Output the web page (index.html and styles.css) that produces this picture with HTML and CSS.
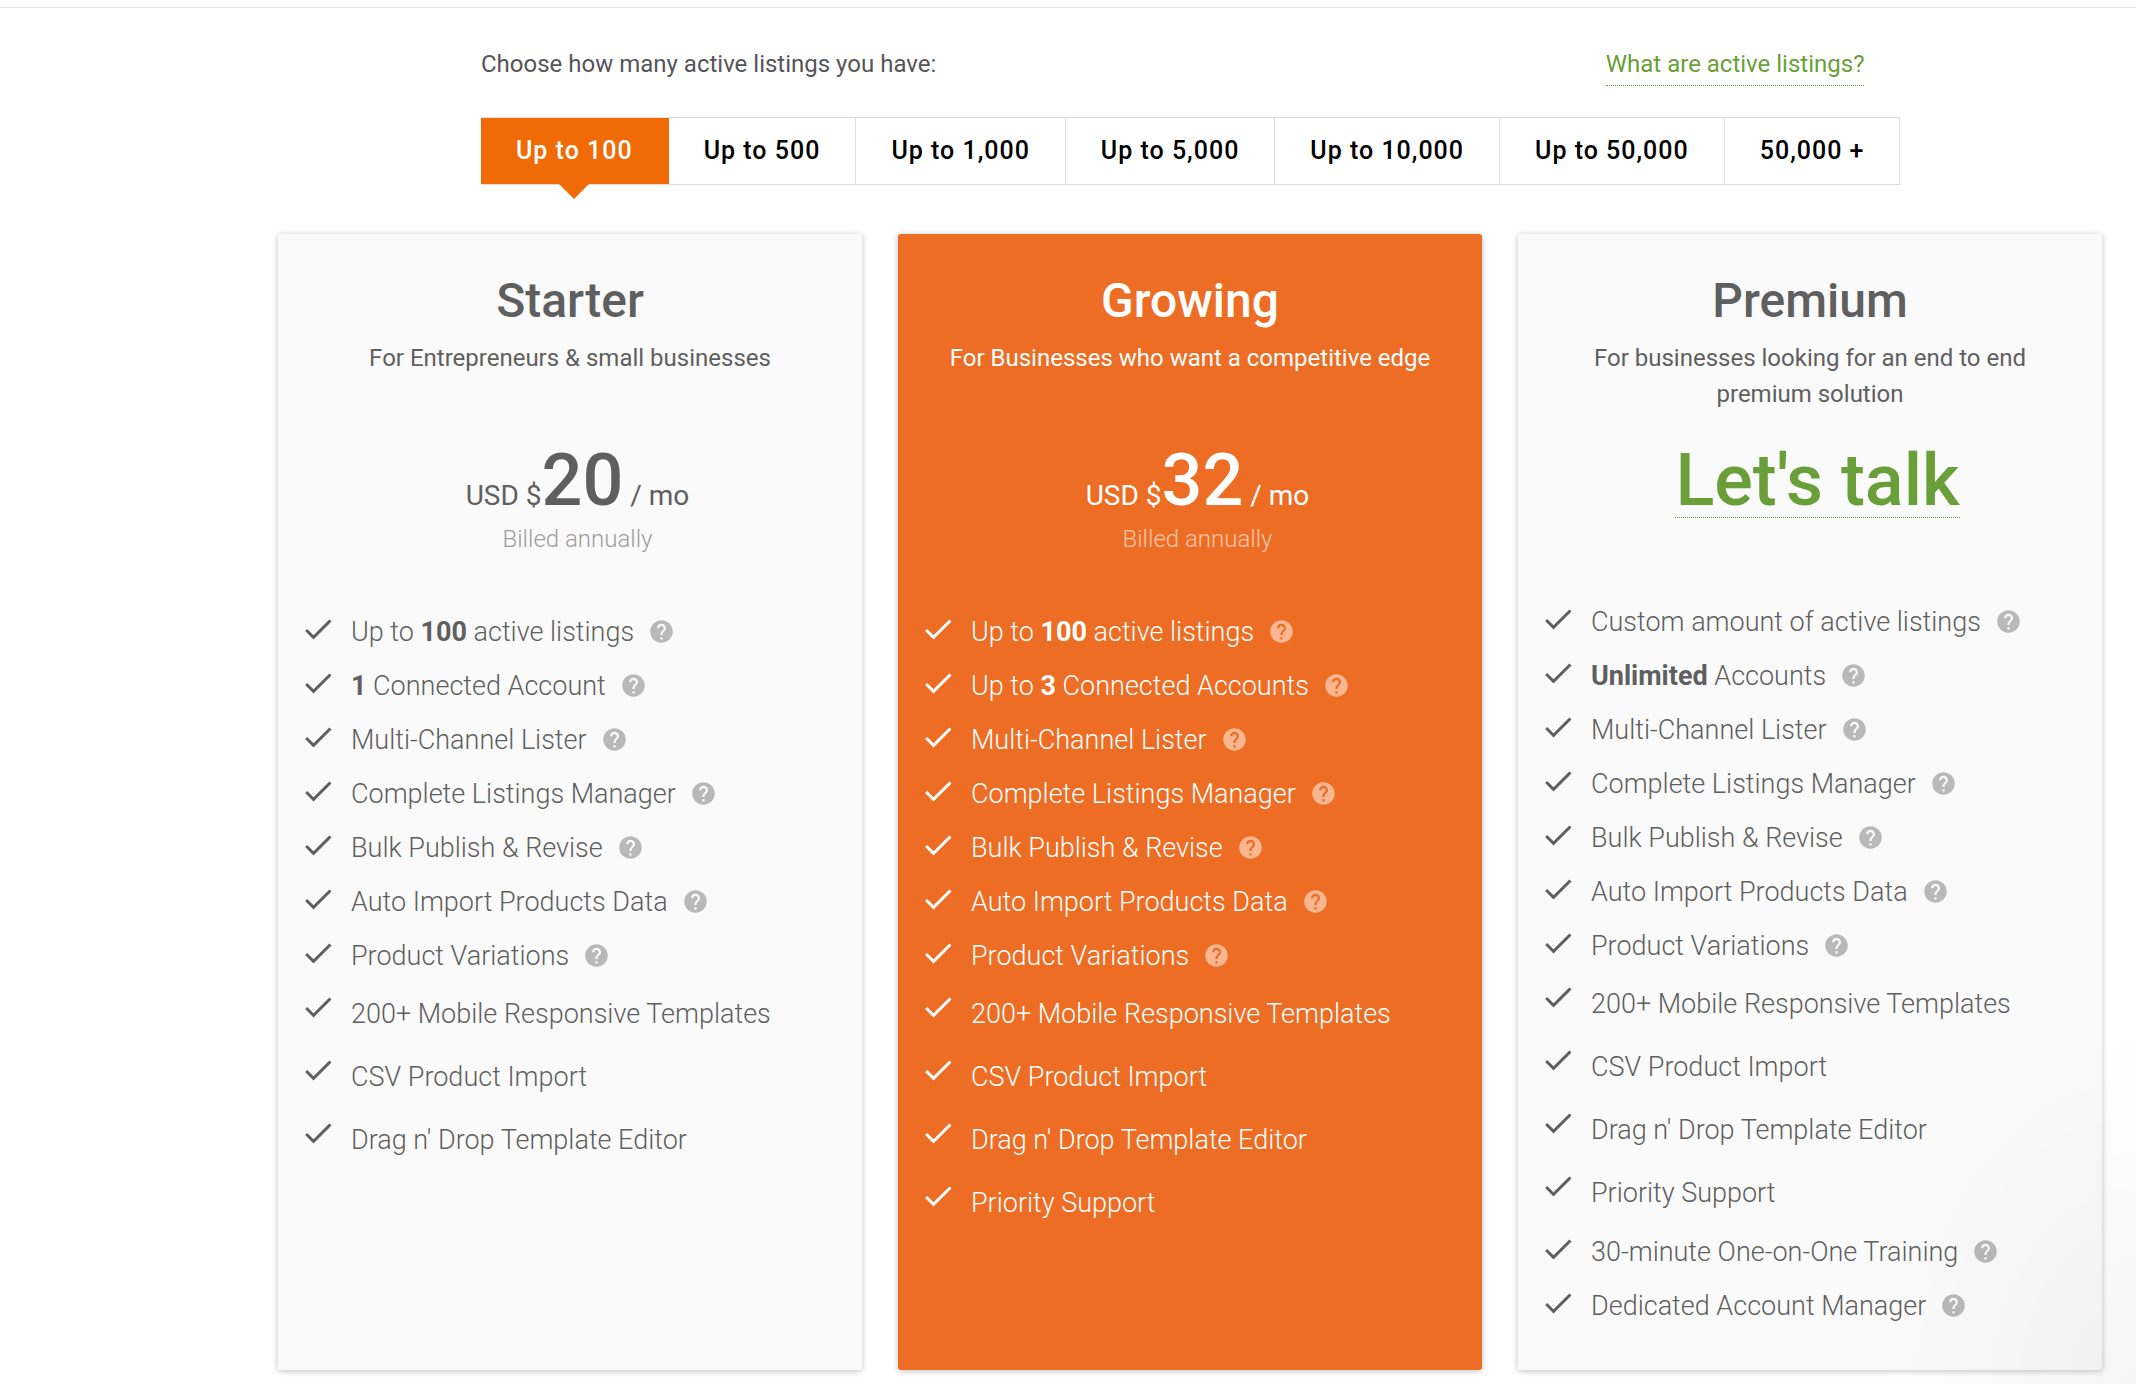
FILE: index.html
```html
<!DOCTYPE html>
<html lang="en">
<head>
<meta charset="utf-8">
<title>Pricing plans</title>
<link rel="stylesheet" href="styles.css">
</head>
<body>
<svg class="sprite" aria-hidden="true">
  <symbol id="check" viewBox="0 0 24 24"><path d="M9 16.17L4.83 12l-1.42 1.41L9 19 21 7l-1.41-1.41z"/></symbol>
  <symbol id="help" viewBox="0 0 24 24"><path d="M12 2C6.48 2 2 6.48 2 12s4.48 10 10 10 10-4.480 10-10S17.520 2 12 2zm1 17h-2v-2h2v2zm2.070-7.750l-.9.920C13.450 12.900 13 13.500 13 15h-2v-.5c0-1.100.450-2.100 1.170-2.830l1.240-1.260c.370-.360.590-.860.590-1.410 0-1.100-.9-2-2-2s-2 .9-2 2H8c0-2.210 1.790-4 4-4s4 1.790 4 4c0 .880-.360 1.680-.930 2.250z"/></symbol>
</svg>
<main class="page">
  <section class="picker">
    <div class="picker-head">
      <p class="picker-label" id="picker-label">Choose how many active listings you have:</p>
      <a class="help-link" href="#active-listings">What are active listings?</a>
    </div>
    <div class="tabs" role="group" aria-labelledby="picker-label">
      <button class="tab tab-active" type="button" aria-pressed="true">Up to 100</button>
      <button class="tab" type="button">Up to 500</button>
      <button class="tab" type="button">Up to 1,000</button>
      <button class="tab" type="button">Up to 5,000</button>
      <button class="tab" type="button">Up to 10,000</button>
      <button class="tab" type="button">Up to 50,000</button>
      <button class="tab" type="button">50,000 +</button>
    </div>
  </section>
  <section class="plans">
    <article class="plan">
      <h2 class="plan-name">Starter</h2>
      <p class="plan-for">For Entrepreneurs &amp; small businesses</p>
      <div class="price">
        <p class="price-line">USD $<strong class="amount">20</strong> / mo</p>
        <p class="billed">Billed annually</p>
      </div>
      <ul class="features">
        <li class="feature"><svg class="check"><use href="#check"/></svg><span>Up to <b>100</b> active listings</span><svg class="help"><use href="#help"/></svg></li>
        <li class="feature"><svg class="check"><use href="#check"/></svg><span><b>1</b> Connected Account</span><svg class="help"><use href="#help"/></svg></li>
        <li class="feature"><svg class="check"><use href="#check"/></svg><span>Multi-Channel Lister</span><svg class="help"><use href="#help"/></svg></li>
        <li class="feature"><svg class="check"><use href="#check"/></svg><span>Complete Listings Manager</span><svg class="help"><use href="#help"/></svg></li>
        <li class="feature"><svg class="check"><use href="#check"/></svg><span>Bulk Publish &amp; Revise</span><svg class="help"><use href="#help"/></svg></li>
        <li class="feature"><svg class="check"><use href="#check"/></svg><span>Auto Import Products Data</span><svg class="help"><use href="#help"/></svg></li>
        <li class="feature"><svg class="check"><use href="#check"/></svg><span>Product Variations</span><svg class="help"><use href="#help"/></svg></li>
        <li class="feature feature-plain"><svg class="check"><use href="#check"/></svg><span>200+ Mobile Responsive Templates</span></li>
        <li class="feature feature-plain"><svg class="check"><use href="#check"/></svg><span>CSV Product Import</span></li>
        <li class="feature feature-plain"><svg class="check"><use href="#check"/></svg><span>Drag n' Drop Template Editor</span></li>
      </ul>
    </article>
    <article class="plan plan-featured">
      <h2 class="plan-name">Growing</h2>
      <p class="plan-for">For Businesses who want a competitive edge</p>
      <div class="price">
        <p class="price-line">USD $<strong class="amount">32</strong> / mo</p>
        <p class="billed">Billed annually</p>
      </div>
      <ul class="features">
        <li class="feature"><svg class="check"><use href="#check"/></svg><span>Up to <b>100</b> active listings</span><svg class="help"><use href="#help"/></svg></li>
        <li class="feature"><svg class="check"><use href="#check"/></svg><span>Up to <b>3</b> Connected Accounts</span><svg class="help"><use href="#help"/></svg></li>
        <li class="feature"><svg class="check"><use href="#check"/></svg><span>Multi-Channel Lister</span><svg class="help"><use href="#help"/></svg></li>
        <li class="feature"><svg class="check"><use href="#check"/></svg><span>Complete Listings Manager</span><svg class="help"><use href="#help"/></svg></li>
        <li class="feature"><svg class="check"><use href="#check"/></svg><span>Bulk Publish &amp; Revise</span><svg class="help"><use href="#help"/></svg></li>
        <li class="feature"><svg class="check"><use href="#check"/></svg><span>Auto Import Products Data</span><svg class="help"><use href="#help"/></svg></li>
        <li class="feature"><svg class="check"><use href="#check"/></svg><span>Product Variations</span><svg class="help"><use href="#help"/></svg></li>
        <li class="feature feature-plain"><svg class="check"><use href="#check"/></svg><span>200+ Mobile Responsive Templates</span></li>
        <li class="feature feature-plain"><svg class="check"><use href="#check"/></svg><span>CSV Product Import</span></li>
        <li class="feature feature-plain"><svg class="check"><use href="#check"/></svg><span>Drag n' Drop Template Editor</span></li>
        <li class="feature feature-plain"><svg class="check"><use href="#check"/></svg><span>Priority Support</span></li>
      </ul>
    </article>
    <article class="plan">
      <h2 class="plan-name">Premium</h2>
      <p class="plan-for">For businesses looking for an end to end premium solution</p>
      <div class="price price-talk">
        <a class="talk" href="#contact">Let's talk</a>
      </div>
      <ul class="features">
        <li class="feature"><svg class="check"><use href="#check"/></svg><span>Custom amount of active listings</span><svg class="help"><use href="#help"/></svg></li>
        <li class="feature"><svg class="check"><use href="#check"/></svg><span><b>Unlimited</b> Accounts</span><svg class="help"><use href="#help"/></svg></li>
        <li class="feature"><svg class="check"><use href="#check"/></svg><span>Multi-Channel Lister</span><svg class="help"><use href="#help"/></svg></li>
        <li class="feature"><svg class="check"><use href="#check"/></svg><span>Complete Listings Manager</span><svg class="help"><use href="#help"/></svg></li>
        <li class="feature"><svg class="check"><use href="#check"/></svg><span>Bulk Publish &amp; Revise</span><svg class="help"><use href="#help"/></svg></li>
        <li class="feature"><svg class="check"><use href="#check"/></svg><span>Auto Import Products Data</span><svg class="help"><use href="#help"/></svg></li>
        <li class="feature"><svg class="check"><use href="#check"/></svg><span>Product Variations</span><svg class="help"><use href="#help"/></svg></li>
        <li class="feature feature-plain"><svg class="check"><use href="#check"/></svg><span>200+ Mobile Responsive Templates</span></li>
        <li class="feature feature-plain"><svg class="check"><use href="#check"/></svg><span>CSV Product Import</span></li>
        <li class="feature feature-plain"><svg class="check"><use href="#check"/></svg><span>Drag n' Drop Template Editor</span></li>
        <li class="feature feature-plain"><svg class="check"><use href="#check"/></svg><span>Priority Support</span></li>
        <li class="feature"><svg class="check"><use href="#check"/></svg><span>30-minute One-on-One Training</span><svg class="help"><use href="#help"/></svg></li>
        <li class="feature"><svg class="check"><use href="#check"/></svg><span>Dedicated Account Manager</span><svg class="help"><use href="#help"/></svg></li>
      </ul>
    </article>
  </section>
</main>
<div class="corner-shade"></div>
</body>
</html>
```
FILE: styles.css
```css
* {
  box-sizing: border-box;
}

body {
  margin: 0;
  background: #fff;
  color: #5f5f5f;
  font-family: Roboto, "Liberation Sans", sans-serif;
  font-size: 24px;
  line-height: 36px;
}

h2,
p,
ul {
  margin: 0;
  padding: 0;
}

.sprite {
  display: none;
}

.page {
  margin-top: 7px;
  padding: 38px 34px 14px 278px;
  border-top: 1px solid #e2e2e2;
}

.picker {
  display: flex;
  flex-direction: column;
  width: fit-content;
  margin-left: 203px;
}

.picker-head {
  display: flex;
  justify-content: space-between;
  height: 71px;
  padding-right: 36px;
}

.picker-label {
  color: #555558;
}

.help-link,
.talk {
  color: #689f38;
  text-decoration: none;
  border-bottom: 1px dotted #689f38;
}

.help-link {
  height: 40px;
}

.tabs {
  display: flex;
  border: 1px solid #dcdcdc;
  border-left: 0;
}

.tab {
  position: relative;
  height: 66px;
  padding: 0 35px;
  border: 0;
  border-right: 1px solid #dcdcdc;
  background: #fff;
  color: #000;
  font: 500 25px/66px Roboto, "Liberation Sans", sans-serif;
  letter-spacing: 1px;
}

.tab:last-child {
  border-right: 0;
}

.tabs .tab-active {
  border-color: #f06a06;
  background: #f06a06;
  color: #fff;
}

.tab-active::after {
  content: "";
  position: absolute;
  top: 100%;
  left: 50%;
  margin-left: -15px;
  border: 15px solid transparent;
  border-top-color: #f06a06;
  border-bottom: 0;
}

.plans {
  display: grid;
  grid-template-columns: repeat(3, 1fr);
  gap: 36px;
  margin-top: 49px;
}

.plan {
  padding: 37px 22px;
  border-radius: 3px;
  background: #fafafa;
  box-shadow: 0 1px 6px rgba(0, 0, 0, 0.25);
}

.plan-featured {
  background: #ed6d24;
  color: #fff;
}

.plan-name {
  font-size: 48px;
  font-weight: 500;
  line-height: 60px;
  text-align: center;
}

.plan-for {
  height: 72px;
  margin-top: 9px;
  padding: 0 24px;
  text-align: center;
}

.price {
  height: 193px;
  padding: 33px 0 0 15px;
  text-align: center;
}

.price-talk {
  height: 183px;
}

.price-line {
  font-size: 28px;
  line-height: 36px;
}

.amount,
.talk {
  font-size: 72px;
  font-weight: 500;
  line-height: 72px;
}

.talk {
  display: inline-block;
}

.billed {
  margin-top: 4px;
  font-weight: 300;
  opacity: 0.6;
}

.features {
  list-style: none;
}

.feature {
  display: flex;
  align-items: center;
  height: 54px;
  font-size: 27px;
  font-weight: 300;
}

.feature-plain {
  height: 63px;
  padding-bottom: 1px;
}

.feature b {
  font-weight: 700;
}

.check {
  align-self: flex-start;
  width: 36px;
  height: 36px;
  margin: 6px 15px 0 0;
  fill: currentColor;
}

.help {
  width: 27px;
  height: 27px;
  margin: 0 0 2px 14px;
  fill: #b9b9b9;
}

.plan-featured .help {
  fill: #fab591;
}

.corner-shade {
  position: fixed;
  right: 0;
  bottom: 0;
  width: 260px;
  height: 360px;
  background: radial-gradient(ellipse at bottom right, rgba(0, 0, 0, 0.04), transparent 70%);
  pointer-events: none;
}
```
